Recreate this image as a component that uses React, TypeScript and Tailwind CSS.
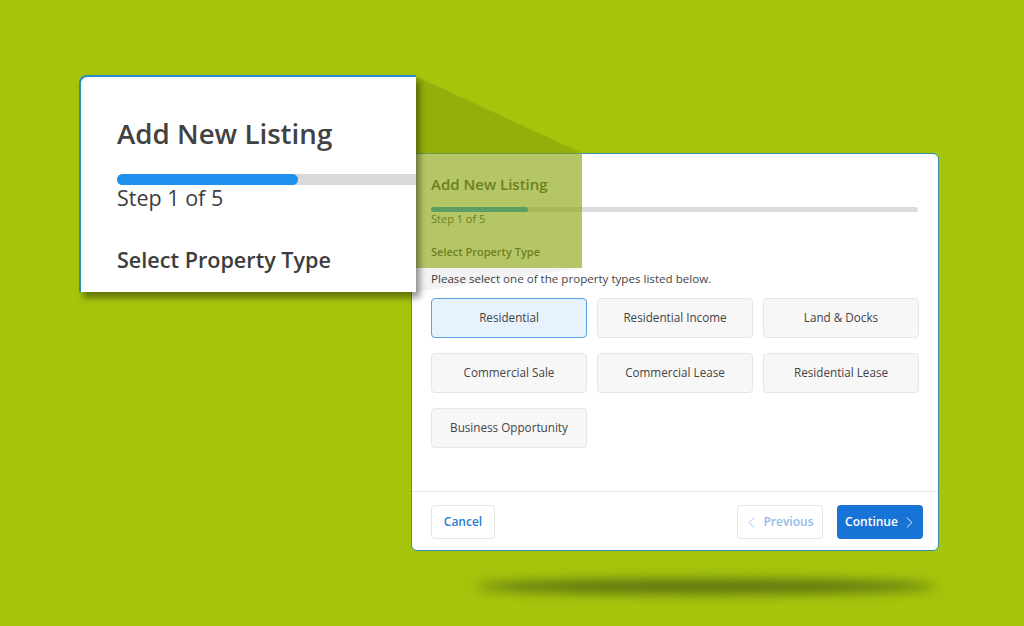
import { ChevronLeft, ChevronRight } from "lucide-react";

const propertyTypes = [
  "Residential",
  "Residential Income",
  "Land & Docks",
  "Commercial Sale",
  "Commercial Lease",
  "Residential Lease",
  "Business Opportunity",
];

const ListingDialog = () => {
  return (
    <div className="absolute left-[411px] top-[153px] w-[528px] h-[398px] bg-white border-[1.5px] border-[#3a8fa8] rounded-[6px] flex flex-col text-[#444]">
      <div className="pl-[19px] pt-[20px]">
        <h2 className="text-[15px] leading-[20px] font-semibold">Add New Listing</h2>

        {/* Progress */}
        <div className="mt-[13px] w-[487px] h-[5px] rounded-full bg-[#dcdcdc]">
          <div className="w-[97px] h-full rounded-full bg-[#1e90f0]" />
        </div>
        <p className="text-[11px] leading-[14px]">Step 1 of 5</p>

        <h3 className="mt-[19px] text-[11px] leading-[14px] font-semibold">Select Property Type</h3>
        <p className="mt-[12px] text-[11.6px] leading-[16px]">
          Please select one of the property types listed below.
        </p>

        <div className="mt-[11px] w-[488px] grid grid-cols-3 gap-x-[10px] gap-y-[15px]">
          {propertyTypes.map((type, i) => (
            <button
              key={type}
              className={
                i === 0
                  ? "h-[40px] rounded-[4px] border border-[#5aa2e6] bg-[#e7f2fd] text-[11.7px] text-[#444]"
                  : "h-[40px] rounded-[4px] border border-[#e6e6e6] bg-[#f7f7f7] text-[11.7px] text-[#444]"
              }
            >
              {type}
            </button>
          ))}
        </div>
      </div>

      {/* Footer */}
      <div className="mt-auto border-t border-[#e8e8e8] pl-[19px] pr-[15px] pt-[13px] pb-[11px] flex items-center">
        <button className="h-[34px] w-[64px] rounded-[4px] border border-[#e6e6e6] bg-white text-[12px] font-semibold text-[#2a7bd0]">
          Cancel
        </button>
        <div className="ml-auto flex items-center gap-[14px]">
          <button className="h-[34px] w-[86px] rounded-[4px] border border-[#e6e6e6] bg-white text-[12px] font-semibold text-[#93bbe8] flex items-center justify-center gap-[2px]">
            <ChevronLeft className="w-[19px] h-[19px] -ml-[4px]" strokeWidth={1.1} />
            Previous
          </button>
          <button className="h-[34px] w-[86px] rounded-[4px] bg-[#1873d6] text-[12px] font-semibold text-white flex items-center justify-center gap-[2px]">
            Continue
            <ChevronRight className="w-[19px] h-[19px] -mr-[4px]" strokeWidth={1.1} />
          </button>
        </div>
      </div>
    </div>
  );
};

const ZoomCallout = () => {
  return (
    <div className="absolute left-[79px] top-[75px] w-[337px] h-[217px] bg-white border-t-2 border-l-2 border-[#2a8bc8] rounded-tl-[8px] overflow-hidden shadow-[4px_6px_6px_rgba(0,0,0,0.4)] text-[#3d3d3d]">
      <div className="pl-[36px] pt-[38px]">
        <h2 className="text-[27.7px] leading-[36px] font-semibold text-[#424242]">Add New Listing</h2>
        <div className="mt-[23px] w-[400px] h-[11px] rounded-l-full bg-[#d9d9d9]">
          <div className="w-[181px] h-full rounded-full bg-[#1e90f0]" />
        </div>
        <p className="text-[21.5px] leading-[26px]">Step 1 of 5</p>
        <h3 className="mt-[35px] text-[21.6px] leading-[28px] font-semibold">Select Property Type</h3>
      </div>
    </div>
  );
};

export default function App() {
  return (
    <div
      className="relative w-[1024px] h-[626px] overflow-hidden bg-[#a5c50c]"
      style={{ fontFamily: '"Open Sans", "Noto Sans", sans-serif' }}
    >
      {/* floor shadow */}
      <div className="absolute left-[475px] top-[579px] w-[462px] h-[15px] rounded-[50%] bg-[#3e4d14]/70 blur-[6px]" />

      <ListingDialog />

      {/* magnifier beam */}
      <svg className="absolute inset-0 pointer-events-none" width="1024" height="626">
        <polygon points="415,76 582,153 582,268 415,268" fill="#88a309" fillOpacity="0.62" />
        <polygon points="415,268 582,268 415,292" fill="#000" fillOpacity="0.05" />
      </svg>

      <ZoomCallout />
    </div>
  );
}
